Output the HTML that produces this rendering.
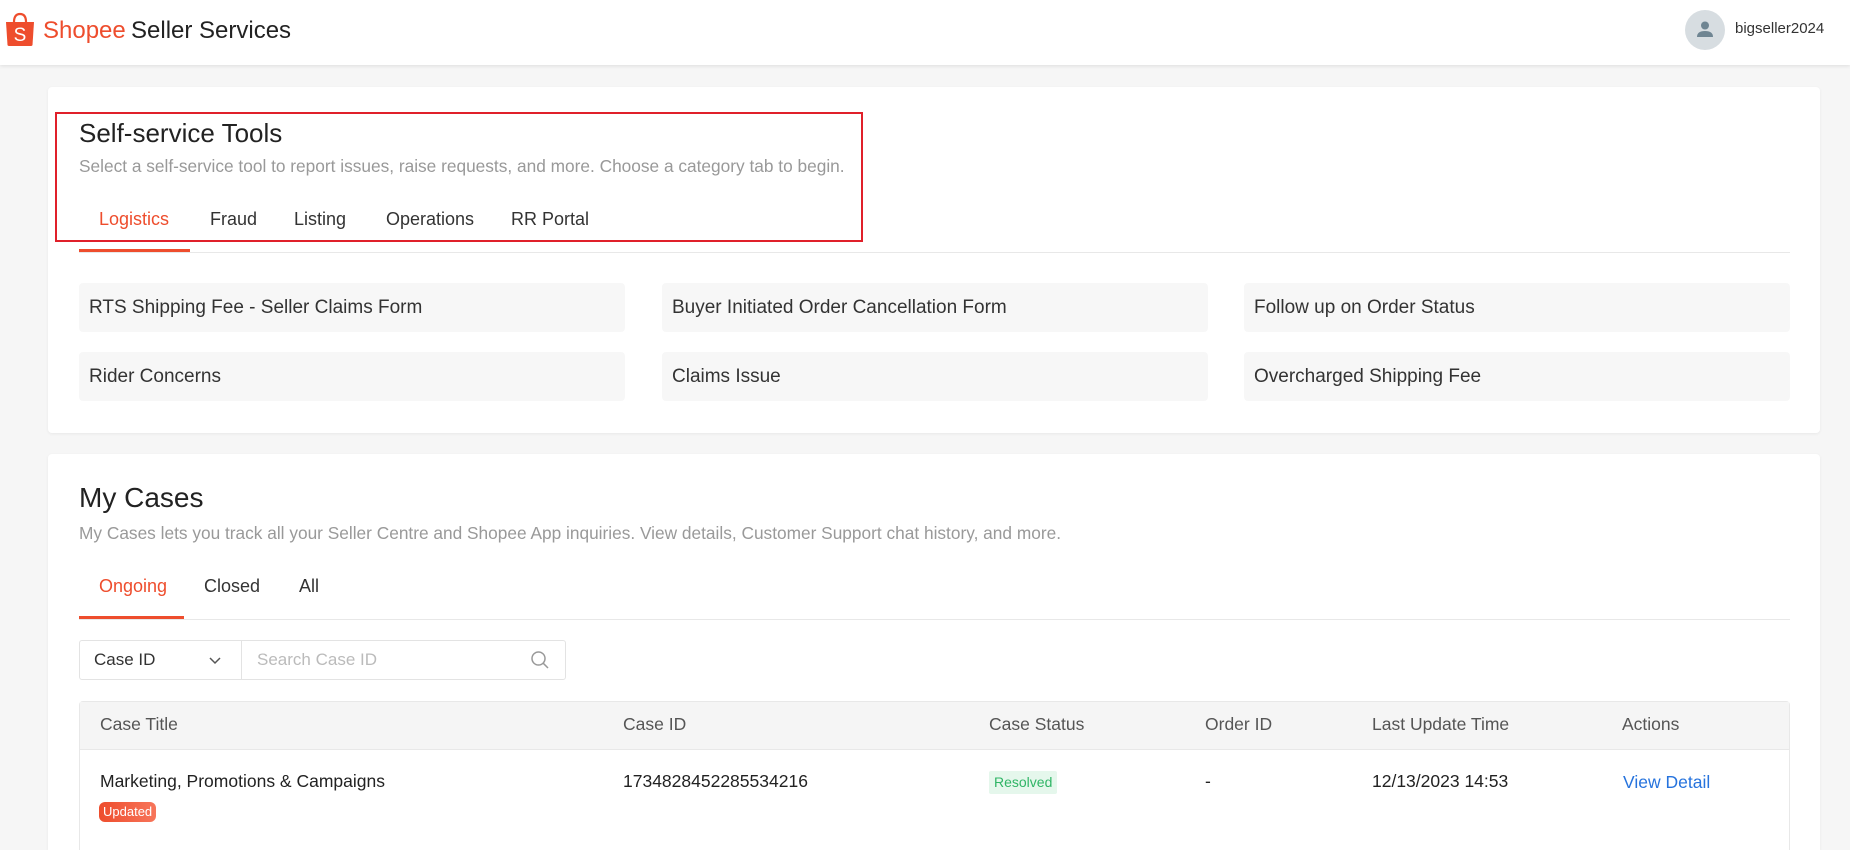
<!DOCTYPE html>
<html><head><meta charset="utf-8"><style>
*{margin:0;padding:0;box-sizing:border-box}
html{width:1850px;height:850px;overflow:hidden}
body{width:1850px;height:850px;overflow:hidden;background:#f6f6f6;font-family:"Liberation Sans",Roboto,sans-serif;color:#333;position:relative}
.a{position:absolute;white-space:nowrap}
.hdr{position:absolute;left:0;top:0;width:1850px;height:65px;background:#fff;box-shadow:0 1px 4px rgba(0,0,0,.1)}
.card{position:absolute;background:#fff;border-radius:4px;box-shadow:0 1px 3px rgba(0,0,0,.06)}
.tile{position:absolute;background:#f7f7f7;border-radius:4px;height:49px;font-size:19px;color:#333;padding-left:10px;line-height:49px}
.tab{font-size:18px;color:#333}
.th{font-size:17.5px;color:#555}
</style></head><body>
<div class="hdr"></div>
<svg class="a" style="left:5px;top:12px" width="30" height="35" viewBox="0 0 30 35"><path d="M9 10 Q9 2 15 2 Q21 2 21 10" fill="none" stroke="#ee4d2d" stroke-width="2.2"/><path d="M1 10 H29 L27.5 33 Q27.3 34 26 34 H4 Q2.7 34 2.5 33 Z" fill="#ee4d2d"/><text x="15" y="29" text-anchor="middle" font-family="Liberation Sans" font-size="19" fill="#fff">S</text></svg>
<div class="a" style="left:43px;top:17px;font-size:24px;color:#ee4d2d">Shopee</div>
<div class="a" style="left:131px;top:17px;font-size:24px;color:#222">Seller Services</div>
<div class="a" style="left:1685px;top:10px;width:40px;height:40px;border-radius:50%;background:#d7dde1"></div>
<svg class="a" style="left:1695px;top:19px" width="20" height="20" viewBox="0 0 20 20"><circle cx="10" cy="6.5" r="4" fill="#6f8592"/><path d="M2 18 Q2 12 10 12 Q18 12 18 18Z" fill="#6f8592"/></svg>
<div class="a" style="left:1735px;top:20px;font-size:15px;color:#333">bigseller2024</div>

<div class="card" style="left:48px;top:87px;width:1772px;height:346px"></div>
<div class="a" style="left:55px;top:112px;width:808px;height:130px;border:2px solid #e0202a"></div>
<div class="a" style="left:79px;top:118px;font-size:26px;color:#222">Self-service Tools</div>
<div class="a" style="left:79px;top:156px;font-size:17.3px;color:#999">Select a self-service tool to report issues, raise requests, and more. Choose a category tab to begin.</div>
<div class="a tab" style="left:99px;top:209px;color:#ee4d2d">Logistics</div>
<div class="a tab" style="left:210px;top:209px">Fraud</div>
<div class="a tab" style="left:294px;top:209px">Listing</div>
<div class="a tab" style="left:386px;top:209px">Operations</div>
<div class="a tab" style="left:511px;top:209px">RR Portal</div>
<div class="a" style="left:79px;top:252px;width:1711px;height:1px;background:#e8e8e8"></div>
<div class="a" style="left:79px;top:249px;width:111px;height:3px;background:#ee4d2d"></div>
<div class="tile" style="left:79px;top:283px;width:546px">RTS Shipping Fee - Seller Claims Form</div>
<div class="tile" style="left:662px;top:283px;width:546px">Buyer Initiated Order Cancellation Form</div>
<div class="tile" style="left:1244px;top:283px;width:546px">Follow up on Order Status</div>
<div class="tile" style="left:79px;top:352px;width:546px">Rider Concerns</div>
<div class="tile" style="left:662px;top:352px;width:546px">Claims Issue</div>
<div class="tile" style="left:1244px;top:352px;width:546px">Overcharged Shipping Fee</div>

<div class="card" style="left:48px;top:454px;width:1772px;height:396px;border-radius:4px 4px 0 0"></div>
<div class="a" style="left:79px;top:482px;font-size:28px;color:#222">My Cases</div>
<div class="a" style="left:79px;top:523px;font-size:17.3px;color:#999">My Cases lets you track all your Seller Centre and Shopee App inquiries. View details, Customer Support chat history, and more.</div>
<div class="a tab" style="left:99px;top:576px;color:#ee4d2d">Ongoing</div>
<div class="a tab" style="left:204px;top:576px">Closed</div>
<div class="a tab" style="left:299px;top:576px">All</div>
<div class="a" style="left:79px;top:619px;width:1711px;height:1px;background:#e8e8e8"></div>
<div class="a" style="left:79px;top:616px;width:105px;height:3px;background:#ee4d2d"></div>
<div class="a" style="left:79px;top:640px;width:487px;height:40px;border:1px solid #e3e3e3;border-radius:3px"></div>
<div class="a" style="left:241px;top:641px;width:1px;height:38px;background:#e3e3e3"></div>
<div class="a" style="left:94px;top:650px;font-size:17px;color:#333">Case ID</div>
<svg class="a" style="left:208px;top:653px" width="14" height="14" viewBox="0 0 14 14"><path d="M2 5 L7 10 L12 5" fill="none" stroke="#555" stroke-width="1.5"/></svg>
<div class="a" style="left:257px;top:650px;font-size:17px;color:#bbb">Search Case ID</div>
<svg class="a" style="left:530px;top:650px" width="20" height="20" viewBox="0 0 20 20"><circle cx="8.5" cy="8.5" r="6.5" fill="none" stroke="#999" stroke-width="1.5"/><path d="M13.3 13.3 L18 18" stroke="#999" stroke-width="1.5"/></svg>
<div class="a" style="left:79px;top:701px;width:1711px;height:149px;border:1px solid #e8e8e8;border-bottom:none;border-radius:4px 4px 0 0"></div>
<div class="a" style="left:80px;top:702px;width:1709px;height:48px;background:#f5f5f5;border-bottom:1px solid #e8e8e8"></div>
<div class="a th" style="left:100px;top:714px">Case Title</div>
<div class="a th" style="left:623px;top:714px">Case ID</div>
<div class="a th" style="left:989px;top:714px">Case Status</div>
<div class="a th" style="left:1205px;top:714px">Order ID</div>
<div class="a th" style="left:1372px;top:714px">Last Update Time</div>
<div class="a th" style="left:1622px;top:714px">Actions</div>
<div class="a" style="left:100px;top:771px;font-size:17.5px;color:#222">Marketing, Promotions &amp; Campaigns</div>
<div class="a" style="left:99px;top:802px;height:20px;padding:0 4px;border-radius:6px;background:linear-gradient(90deg,#ee4d2d,#f7755a);color:#fff;font-size:13px;line-height:20px">Updated</div>
<div class="a" style="left:623px;top:771px;font-size:17.5px;color:#222">1734828452285534216</div>
<div class="a" style="left:989px;top:771px;height:23px;padding:0 5px;background:#e5f7ec;color:#30b566;font-size:14px;line-height:23px;border-radius:2px">Resolved</div>
<div class="a" style="left:1205px;top:771px;font-size:17.5px;color:#222">-</div>
<div class="a" style="left:1372px;top:771px;font-size:17.5px;color:#222">12/13/2023 14:53</div>
<div class="a" style="left:1623px;top:772px;font-size:17.5px;color:#2673dd">View Detail</div>
</body></html>
